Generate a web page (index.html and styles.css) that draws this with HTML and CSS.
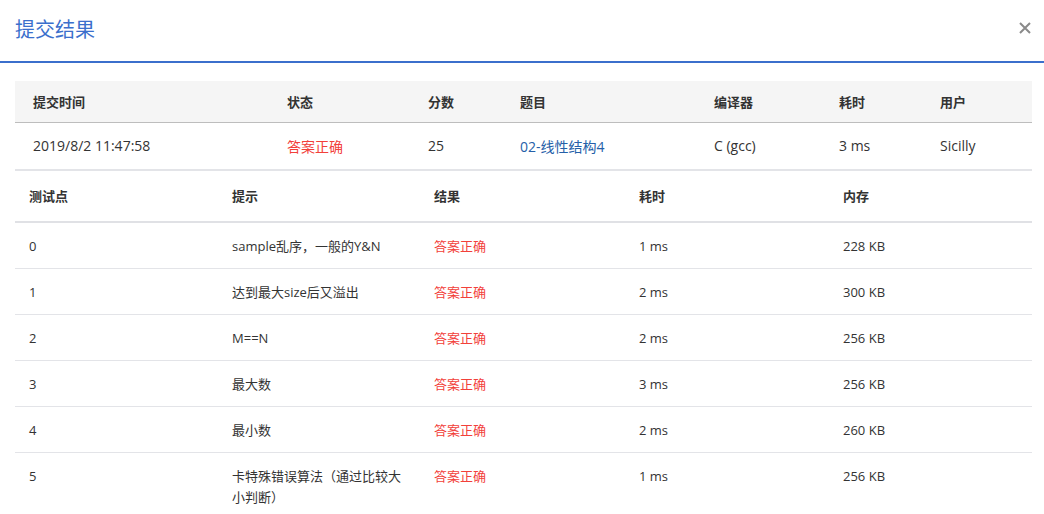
FILE: index.html
```html
<!DOCTYPE html>
<html lang="zh-CN">
<head>
<meta charset="utf-8">
<title>提交结果</title>
<link rel="stylesheet" href="styles.css">
</head>
<body>
<div class="modal">
  <div class="modal-header">
    <h2 class="modal-title">提交结果</h2>
    <button class="close" aria-label="关闭">
      <svg width="12" height="12" viewBox="0 0 12 12"><path d="M1 1L11 11M11 1L1 11" stroke="#8a8a8a" stroke-width="2" fill="none"/></svg>
    </button>
  </div>
  <div class="modal-body">
    <table class="summary">
      <colgroup>
        <col class="c1"><col class="c2"><col class="c3"><col class="c4"><col class="c5"><col class="c6"><col>
      </colgroup>
      <thead>
        <tr><th>提交时间</th><th>状态</th><th>分数</th><th>题目</th><th>编译器</th><th>耗时</th><th>用户</th></tr>
      </thead>
      <tbody>
        <tr><td>2019/8/2 11:47:58</td><td class="ok">答案正确</td><td>25</td><td><a class="link" href="#">02-线性结构4</a></td><td>C (gcc)</td><td>3 ms</td><td>Sicilly</td></tr>
      </tbody>
    </table>
    <table class="cases">
      <colgroup>
        <col class="d1"><col class="d2"><col class="d3"><col class="d4"><col>
      </colgroup>
      <thead>
        <tr><th>测试点</th><th>提示</th><th>结果</th><th>耗时</th><th>内存</th></tr>
      </thead>
      <tbody>
        <tr><td>0</td><td>sample乱序，一般的Y&amp;N</td><td class="ok">答案正确</td><td>1 ms</td><td>228 KB</td></tr>
        <tr><td>1</td><td>达到最大size后又溢出</td><td class="ok">答案正确</td><td>2 ms</td><td>300 KB</td></tr>
        <tr><td>2</td><td>M==N</td><td class="ok">答案正确</td><td>2 ms</td><td>256 KB</td></tr>
        <tr><td>3</td><td>最大数</td><td class="ok">答案正确</td><td>3 ms</td><td>256 KB</td></tr>
        <tr><td>4</td><td>最小数</td><td class="ok">答案正确</td><td>2 ms</td><td>260 KB</td></tr>
        <tr><td>5</td><td>卡特殊错误算法（通过比较大小判断）</td><td class="ok">答案正确</td><td>1 ms</td><td>256 KB</td></tr>
      </tbody>
    </table>
  </div>
</div>
</body>
</html>
```
FILE: styles.css
```css
html, body {
  margin: 0;
  padding: 0;
  background: #fff;
}
body {
  font-family: "Open Sans", "Noto Sans CJK SC", sans-serif;
  color: #333;
  width: 1044px;
  height: 514px;
  overflow: hidden;
}
.modal-header {
  height: 61px;
  border-bottom: 2px solid #3b6fcc;
  display: flex;
  align-items: center;
  justify-content: space-between;
  padding: 0 13px 0 15px;
}
.modal-title {
  margin: 0;
  font-size: 20px;
  font-weight: normal;
  color: #3b6fcc;
  line-height: 28px;
  position: relative;
  top: -1px;
}
.close {
  border: 0;
  background: none;
  padding: 0;
  width: 12px;
  height: 12px;
  display: flex;
  position: relative;
  top: -3px;
}
.modal-body {
  padding: 18px 12px 0 15px;
}
table {
  width: 100%;
  border-collapse: collapse;
  table-layout: fixed;
}
th {
  text-align: left;
  font-weight: bold;
  font-size: 13px;
  color: #333;
}
.summary .c1 { width: 254px; }
.summary .c2 { width: 141px; }
.summary .c3 { width: 92px; }
.summary .c4 { width: 194px; }
.summary .c5 { width: 125px; }
.summary .c6 { width: 101px; }
.summary th {
  background: #f5f5f5;
  height: 41px;
  padding: 0 0 0 18px;
  border-bottom: 1px solid #bdbdbd;
  box-sizing: border-box;
}
.summary td {
  font-size: 14px;
  height: 46px;
  padding: 0 0 0 18px;
  border-bottom: 2px solid #e3e4e8;
  color: #333;
}
.summary td.ok, .cases td.ok { color: #f2403a; }
.link {
  color: #2560a8;
  text-decoration: none;
}
.cases .d1 { width: 203px; }
.cases .d2 { width: 202px; }
.cases .d3 { width: 205px; }
.cases .d4 { width: 204px; }
.cases th {
  height: 51px;
  padding: 0 14px;
  border-bottom: 2px solid #e0e1e5;
  box-sizing: border-box;
}
.cases td {
  font-size: 13px;
  line-height: 21px;
  padding: 13px 14px 11px;
  vertical-align: top;
  border-bottom: 1px solid #e3e4e8;
}
.cases tr:last-child td {
  border-bottom: 0;
}
```
